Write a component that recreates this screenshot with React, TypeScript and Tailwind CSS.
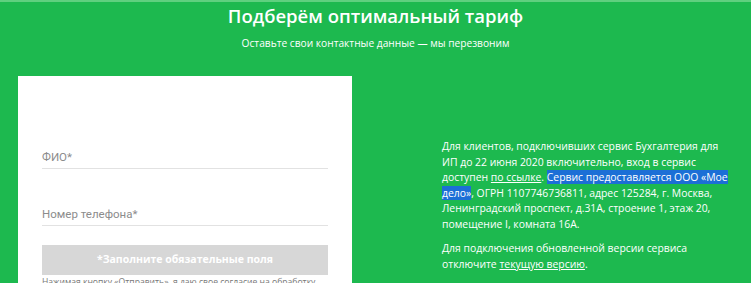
export default function App() {
  return (
    <div
      className="h-[283px] w-[751px] overflow-hidden bg-[#1db94f] border-t-2 border-[#5fd07f]"
      style={{ fontFamily: '"Open Sans", Arial, sans-serif' }}
    >
      {/* Шапка */}
      <div className="text-center text-white">
        <h2 className="text-[18.5px] leading-[24px] font-semibold pt-[2px]">Подберём оптимальный тариф</h2>
        <p className="text-[10.2px] leading-[14px] mt-[8px]">Оставьте свои контактные данные — мы перезвоним</p>
      </div>

      <div className="flex items-start mt-[26px]">
        {/* Форма */}
        <div className="ml-[18px] w-[334px] h-[240px] bg-white px-[24px] pt-[70px]">
          <div
            className="h-[23px] border-b border-[#e2e2e2] flex items-end pb-[3px] text-[11.5px] leading-[16px] text-[#8c8c8c]"
            style={{ fontFamily: 'Roboto, Arial, sans-serif' }}
          >
            ФИО*
          </div>
          <div
            className="mt-[34px] h-[23px] border-b border-[#e2e2e2] flex items-end pb-[3px] text-[11.5px] leading-[16px] text-[#8c8c8c]"
            style={{ fontFamily: 'Roboto, Arial, sans-serif' }}
          >
            Номер телефона*
          </div>
          <button className="mt-[19px] w-full h-[30px] bg-[#d7d7d7] text-white text-[10.5px] font-bold">
            *Заполните обязательные поля
          </button>
          <p className="mt-[1px] text-[8.6px] leading-[12px] text-[#777] whitespace-nowrap">
            Нажимая кнопку «Отправить», я даю свое согласие на обработку
          </p>
        </div>

        {/* Текст */}
        <div className="ml-[90px] mt-[63px] text-white text-[10.4px] leading-[15.5px] whitespace-nowrap">
          <p>
            Для клиентов, подключивших сервис Бухгалтерия для
            <br />
            ИП до 22 июня 2020 включительно, вход в сервис
            <br />
            доступен <span className="underline">по ссылке</span>.{' '}
            <span className="bg-[#1c6fd6]">Сервис предоставляется ООО «Мое</span>
            <br />
            <span className="bg-[#1c6fd6]">дело»</span>, ОГРН 1107746736811, адрес 125284, г. Москва,
            <br />
            Ленинградский проспект, д.31А, строение 1, этаж 20,
            <br />
            помещение I, комната 16А.
          </p>
          <p className="mt-[9px]">
            Для подключения обновленной версии сервиса
            <br />
            отключите <span className="underline">текущую версию</span>.
          </p>
        </div>
      </div>
    </div>
  );
}
